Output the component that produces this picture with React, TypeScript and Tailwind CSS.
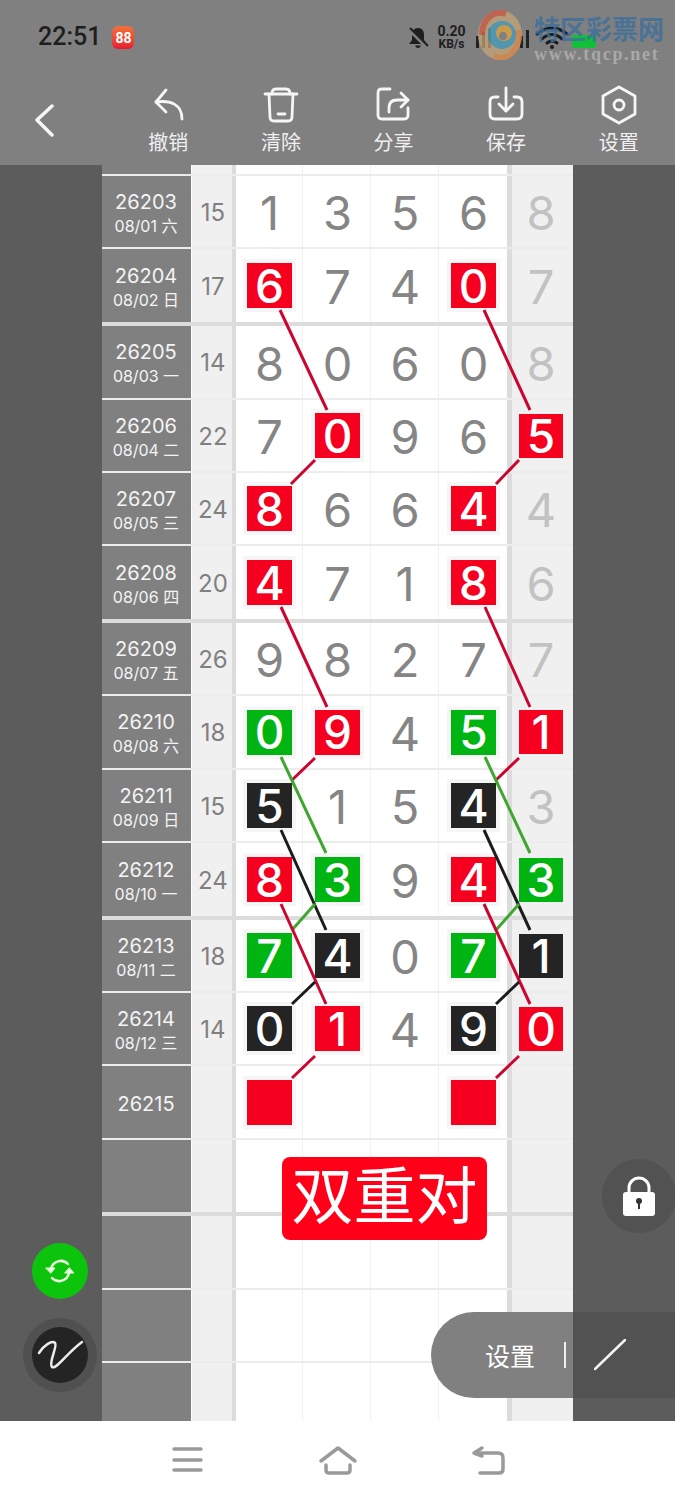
import React from "react";

type Row = { h: string; thick?: boolean; id?: string; date?: string; sum?: string; cells?: string[] };

const rows: Row[] = [
  { h: "h-[11px]" },
  { h: "h-[73px]", id: "26203", date: "08/01 六", sum: "15", cells: ["1", "3", "5", "6", "8"] },
  { h: "h-[77px]", thick: true, id: "26204", date: "08/02 日", sum: "17", cells: ["r6", "7", "4", "r0", "7"] },
  { h: "h-[74px]", id: "26205", date: "08/03 一", sum: "14", cells: ["8", "0", "6", "0", "8"] },
  { h: "h-[73px]", id: "26206", date: "08/04 二", sum: "22", cells: ["7", "r0", "9", "6", "r5"] },
  { h: "h-[73px]", id: "26207", date: "08/05 三", sum: "24", cells: ["r8", "6", "6", "r4", "4"] },
  { h: "h-[77px]", thick: true, id: "26208", date: "08/06 四", sum: "20", cells: ["r4", "7", "1", "r8", "6"] },
  { h: "h-[73px]", id: "26209", date: "08/07 五", sum: "26", cells: ["9", "8", "2", "7", "7"] },
  { h: "h-[74px]", id: "26210", date: "08/08 六", sum: "18", cells: ["g0", "r9", "4", "g5", "r1"] },
  { h: "h-[73px]", id: "26211", date: "08/09 日", sum: "15", cells: ["k5", "1", "5", "k4", "3"] },
  { h: "h-[77px]", thick: true, id: "26212", date: "08/10 一", sum: "24", cells: ["r8", "g3", "9", "r4", "g3"] },
  { h: "h-[73px]", id: "26213", date: "08/11 二", sum: "18", cells: ["g7", "k4", "0", "g7", "k1"] },
  { h: "h-[73px]", id: "26214", date: "08/12 三", sum: "14", cells: ["k0", "r1", "4", "k9", "r0"] },
  { h: "h-[74px]", id: "26215", cells: ["r", "", "", "r", ""] },
  { h: "h-[76px]", thick: true },
  { h: "h-[74px]" },
  { h: "h-[73px]" },
  { h: "h-[58px]" },
];

const RED = "#c9062f";
const GREEN = "#3fa62f";
const BLACK = "#1c1c1c";
const lines: [number, number, number, number, string][] = [
  [280, 310, 327, 410, RED], [315, 460, 291, 484, RED], [281, 607, 327, 707, RED],
  [315, 758, 292, 780, RED], [281, 757, 326, 853, GREEN], [281, 830, 326, 930, BLACK],
  [315, 904, 292, 930, GREEN], [281, 904, 326, 1004, RED], [315, 982, 292, 1004, BLACK],
  [315, 1056, 292, 1078, RED],
  [484, 310, 530, 410, RED], [519, 460, 496, 484, RED], [485, 607, 530, 707, RED],
  [519, 758, 496, 780, RED], [485, 757, 530, 853, GREEN], [484, 830, 530, 930, BLACK],
  [519, 904, 496, 930, GREEN], [484, 904, 530, 1004, RED], [519, 982, 496, 1004, BLACK],
  [519, 1056, 496, 1078, RED],
];

const digitFont = "font-['Inter','Liberation_Sans',sans-serif]";

function Cell({ value, last }: { value: string; last?: boolean }) {
  const kind = value.length === 2 || value === "r" ? value[0] : "";
  const text = value.length === 2 ? value[1] : value === "r" ? "" : value;
  if (kind) {
    const bg = kind === "r" ? "bg-[#f5001f]" : kind === "g" ? "bg-[#00b512]" : "bg-[#242424]";
    return (
      <div className={`${last ? "w-[44px] h-[44px]" : "w-[45px] h-[45px]"} flex items-center justify-center text-white text-[46px] font-medium leading-none shadow-[0_0_0_4px_rgba(240,240,240,0.6)] ${bg} ${digitFont}`}>
        {text}
      </div>
    );
  }
  return (
    <span className={`text-[47px] leading-none pt-[2px] ${last ? "text-[#c2c2c2]" : "text-[#858585]"} ${digitFont}`}>{text}</span>
  );
}

function TableRow({ row }: { row: Row }) {
  const c = row.cells ?? ["", "", "", "", ""];
  return (
    <div className={`flex shrink-0 ${row.h} ${row.thick ? "border-b-4 border-[#dcdcdc]" : row.h === "h-[58px]" ? "" : "border-b-2 border-[#ececec]"}`}>
      <div className="w-[90px] border-r border-white bg-[#808080] text-[#f4f4f4] flex flex-col items-center justify-center pt-[4px] pr-[1px]">
        {row.id && <div className={`text-[20px] leading-[25px] ${digitFont}`}>{row.id}</div>}
        {row.date && <div className="text-[16px] leading-[23px] font-['Inter','Noto_Sans_CJK_SC',sans-serif]">{row.date}</div>}
      </div>
      <div className={`w-[44px] border-r-4 border-[#dcdcdc] bg-[#f0f0f0] text-[#808080] text-[24px] flex items-center justify-center pl-[2px] pt-[2px] ${digitFont}`}>
        {row.sum}
      </div>
      <div className="w-[67px] border-r border-[#f2f2f2] flex items-center justify-center pl-[1px]"><Cell value={c[0]} /></div>
      <div className="w-[68px] border-r border-[#f2f2f2] flex items-center justify-center pl-[2px]"><Cell value={c[1]} /></div>
      <div className="w-[68px] border-r border-[#f2f2f2] flex items-center justify-center pl-[1px]"><Cell value={c[2]} /></div>
      <div className="w-[73px] border-r-[5px] border-[#dcdcdc] flex items-center justify-center pl-[1px]"><Cell value={c[3]} /></div>
      <div className="w-[61px] bg-[#f0f0f0] flex items-center justify-center pr-[3px]"><Cell value={c[4]} last /></div>
    </div>
  );
}

const Ico = ({ children }: { children: React.ReactNode }) => (
  <svg width="40" height="42" viewBox="0 0 40 42" fill="none" stroke="#f6f6f6" strokeWidth="2.8" strokeLinecap="round" strokeLinejoin="round">
    {children}
  </svg>
);

const tools: [string, React.ReactNode][] = [
  ["撤销", <><path d="M18 6 L8 18 L18 28" /><path d="M8 18 C22 16 34 20 34 35" /></>],
  ["清除", <><path d="M4 10 H36" /><path d="M11 10 Q11 5 15 5 H25 Q29 5 29 10" /><path d="M8 10 L9 33 Q9 37 13 37 H27 Q31 37 31 33 L32 10" /><path d="M17 30 H24" /></>],
  ["分享", <><path d="M17 5 H9 Q5 5 5 9 V31 Q5 35 9 35 H31 Q35 35 35 31 V24" /><path d="M16 28 V24 Q16 16 24 16 H35" /><path d="M28 9 L35 16 L28 23" /></>],
  ["保存", <><path d="M12 13 H9 Q4 13 4 18 V30 Q4 35 9 35 H31 Q36 35 36 30 V18 Q36 13 31 13 H28" /><path d="M20 4 V27" /><path d="M13 20 L20 27 L27 20" /></>],
  ["设置", <><path d="M20 3 L36 12 V30 L20 39 L4 30 V12 Z" /><circle cx="20" cy="21" r="5" /></>],
];

export default function App() {
  return (
    <div className="relative w-[675px] h-[1500px] overflow-hidden bg-white font-['Noto_Sans_CJK_SC',sans-serif]">
      {/* Status bar */}
      <div className="h-[84px] bg-[#808080] flex items-start pl-[38px] pt-[21px]">
        <span className="text-[25px] leading-[32px] font-medium text-[#1e1e1e] font-['Roboto',sans-serif]">22:51</span>
        <div className="ml-[11px] mt-[5px] w-[22px] h-[23px] rounded-[6px] bg-gradient-to-b from-[#f2703a] to-[#e8142f] flex items-center justify-center text-white text-[14px] font-bold leading-none font-['Roboto',sans-serif]">
          88
        </div>
        <svg className="ml-[273px] mt-[6px]" width="22" height="22" viewBox="0 0 22 22" fill="#1e1e1e">
          <path d="M11 1 C7 1 5 4 5 8 V13 L2 17 H20 L17 13 V8 C17 4 15 1 11 1 Z" />
          <path d="M8 18.5 H14 Q13 21 11 21 Q9 21 8 18.5 Z" />
          <path d="M2 2 L20 20" stroke="#808080" strokeWidth="4" />
          <path d="M3 1 L21 19" stroke="#1e1e1e" strokeWidth="2" />
        </svg>
        <div className="ml-[8px] mt-[4px] flex flex-col items-center text-[#1e1e1e] font-bold font-['Roboto',sans-serif]">
          <span className="text-[14px] leading-[13px]">0.20</span>
          <span className="text-[12px] leading-[13px]">KB/s</span>
        </div>
      </div>

      {/* Status right-hand icons and watermark */}
      <svg className="absolute left-[476px] top-[10px]" width="125" height="50" viewBox="0 0 125 50">
        <g fill="#222">
          <rect x="0" y="26" width="3" height="12" /><rect x="6" y="22" width="3" height="16" /><rect x="12" y="18" width="3" height="20" />
          <rect x="44" y="26" width="3" height="12" /><rect x="50" y="20" width="3" height="18" />
        </g>
        <g fill="none" stroke="#1a1a1a" strokeWidth="3" strokeLinecap="round">
          <path d="M61 24 Q76 12 91 24" /><path d="M66 29 Q76 20 86 29" /><path d="M71 33 Q76 29 81 33" />
        </g>
        <circle cx="76" cy="37" r="2" fill="#1a1a1a" />
        <rect x="96" y="25" width="24" height="13" rx="2" fill="#10c038" />
      </svg>
      <svg className="absolute left-[476px] top-[10px] opacity-85" width="50" height="50" viewBox="0 0 50 50" fill="none">
        <ellipse cx="24" cy="25" rx="22" ry="25" fill="#c9a878" opacity="0.85" />
        <path d="M6 25 A18 22 0 0 1 30 4" stroke="#c8604a" strokeWidth="6" />
        <path d="M42 20 A18 22 0 0 1 18 46" stroke="#d88a50" strokeWidth="6" />
        <circle cx="26" cy="25" r="14" fill="#4a9ab8" />
        <circle cx="28" cy="23" r="8" fill="#d8a040" />
        <circle cx="27" cy="26" r="4" fill="#808080" />
      </svg>
      <div className="absolute left-[534px] top-[11px] w-[135px] flex flex-col items-start">
        <span className="text-[26px] leading-[33px] font-bold whitespace-nowrap text-[#3d6f9c] opacity-80">特区彩票网</span>
        <span className="text-[18px] leading-[20px] font-bold tracking-[1.7px] whitespace-nowrap text-[#a9a9a9] font-['Liberation_Serif',serif]">www.tqcp.net</span>
      </div>

      {/* Toolbar */}
      <div className="h-[81px] bg-[#808080] flex">
        <div className="w-[112px] flex items-start pl-[33px] pt-[19px]">
          <svg width="24" height="34" viewBox="0 0 24 34" fill="none" stroke="#f6f6f6" strokeWidth="3.5" strokeLinecap="round" strokeLinejoin="round">
            <path d="M19 3 L4 17 L19 32" />
          </svg>
        </div>
        {tools.map(([label, icon]) => (
          <div key={label} className="flex-1 flex flex-col items-center">
            <Ico>{icon}</Ico>
            <span className="mt-[4px] text-[20px] leading-[24px] text-[#f0f0f0]">{label}</span>
          </div>
        ))}
      </div>

      {/* Main */}
      <div className="flex h-[1256px]">
        <div className="w-[102px] bg-[#5c5c5c]" />
        <div className="w-[471px] flex flex-col bg-white">
          {rows.map((r, i) => (
            <TableRow key={i} row={r} />
          ))}
        </div>
        <div className="w-[102px] bg-[#5c5c5c]" />
      </div>

      {/* Bottom nav */}
      <div className="h-[79px] bg-white flex justify-center pt-[20px]">
        <div className="w-[150px] flex justify-center">
          <svg width="40" height="40" viewBox="0 0 40 40" fill="none" stroke="#9a9a9a" strokeWidth="3.5" strokeLinecap="round">
            <path d="M6 8 H33" /><path d="M6 19 H33" /><path d="M6 29 H33" />
          </svg>
        </div>
        <div className="w-[150px] flex justify-center">
          <svg width="40" height="40" viewBox="0 0 40 40" fill="none" stroke="#9a9a9a" strokeWidth="3.5" strokeLinecap="round" strokeLinejoin="round">
            <path d="M3 20 L20 7 L37 20" /><path d="M8 24 V29 Q8 32 11 32 H29 Q32 32 32 29 V24" />
          </svg>
        </div>
        <div className="w-[150px] flex justify-center">
          <svg width="40" height="40" viewBox="0 0 40 40" fill="none" stroke="#9a9a9a" strokeWidth="3.5" strokeLinecap="round" strokeLinejoin="round">
            <path d="M8 12 H30 Q35 12 35 17 V28 Q35 32 31 32 H12" /><path d="M14 7 L6 12 L14 15" />
          </svg>
        </div>
      </div>

      {/* Connecting lines drawn over the table */}
      <svg className="absolute left-0 top-0 pointer-events-none" width="675" height="1500" viewBox="0 0 675 1500" fill="none">
        {lines.map(([x1, y1, x2, y2, c], i) => (
          <line key={i} x1={x1} y1={y1} x2={x2} y2={y2} stroke={c} strokeWidth="3" />
        ))}
      </svg>

      {/* 双重对 badge */}
      <div className="absolute left-[282px] top-[1157px] w-[205px] h-[83px] rounded-[8px] bg-[#ff0019] text-white text-[62px] leading-none flex items-center justify-center pb-[14px]">
        双重对
      </div>

      {/* Lock */}
      <div className="absolute left-[602px] top-[1159px] w-[74px] h-[74px] rounded-full bg-[#525252] flex items-center justify-center">
        <svg width="36" height="42" viewBox="0 0 36 42">
          <path d="M8 18 V13 A10 10 0 0 1 28 13 V18" fill="none" stroke="#fff" strokeWidth="3" />
          <rect x="2" y="17" width="32" height="24" rx="3" fill="#fff" />
          <circle cx="18" cy="26" r="3" fill="#333" />
          <rect x="17" y="27" width="2" height="7" fill="#333" />
        </svg>
      </div>

      {/* Sync */}
      <div className="absolute left-[32px] top-[1243px] w-[56px] h-[56px] rounded-full bg-[#0cc40c] flex items-center justify-center">
        <svg width="32" height="32" viewBox="0 0 32 32" fill="none" stroke="#e8ffe0" strokeWidth="2.5" strokeLinecap="round">
          <path d="M7 14 A10 10 0 0 1 24 9" />
          <path d="M25 18 A10 10 0 0 1 8 23" />
          <path d="M2 13 H11 L7 18 Z" fill="#e8ffe0" strokeWidth="1" />
          <path d="M21 18 H30 L25.5 13 Z" fill="#e8ffe0" strokeWidth="1" />
        </svg>
      </div>

      {/* Signature tool */}
      <div className="absolute left-[23px] top-[1318px] w-[74px] h-[74px] rounded-full bg-[#505050] flex items-center justify-center">
        <div className="w-[56px] h-[56px] rounded-full bg-[#242424] flex items-center justify-center">
          <svg width="56" height="56" viewBox="0 0 56 56" fill="none" stroke="#ececec" strokeWidth="2.5" strokeLinecap="round">
            <path d="M7 26 C12 18 20 13 23 16 C26 19 16 36 20 40 C24 43 35 26 50 15" />
          </svg>
        </div>
      </div>

      {/* Settings pill */}
      <div className="absolute left-[431px] top-[1312px] w-[244px] h-[86px] flex">
        <div className="w-[142px] bg-[#808080] rounded-l-[43px] flex items-center justify-end text-white">
          <span className="text-[25px] leading-none mr-[29px]">设置</span>
          <span className="w-[2px] h-[26px] bg-[#f0f0f0]" />
          <span className="w-[7px]" />
        </div>
        <div className="w-[102px] bg-[#525252] flex items-center pl-[21px]">
          <svg width="32" height="32" viewBox="0 0 32 32" fill="none" stroke="#f4f4f4" strokeWidth="2.5" strokeLinecap="round">
            <path d="M1 30 L31 1" />
          </svg>
        </div>
      </div>
    </div>
  );
}
